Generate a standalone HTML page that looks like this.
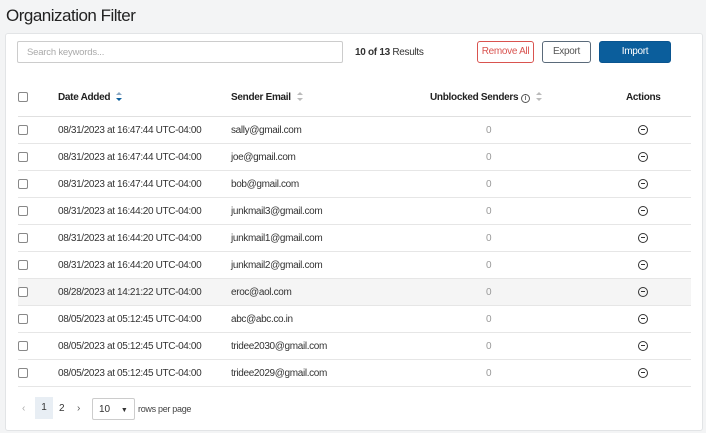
<!DOCTYPE html>
<html><head><style>
*{box-sizing:border-box;margin:0;padding:0}
body{width:706px;height:433px;background:#f3f4f5;font-family:"Liberation Sans",sans-serif;position:relative;overflow:hidden;color:#333}
.t{position:absolute;left:6px;top:6px;font-size:17px;color:#222;letter-spacing:-0.5px}
.card{position:absolute;left:5px;top:33px;width:698px;height:398px;background:#fff;border:1px solid #e2e4e6;border-radius:3px}
.abs{position:absolute}
.inp{left:17px;top:41px;width:326px;height:22px;border:1px solid #ccc;border-radius:2px;font-size:9.5px;color:#aaa;padding:5px 9px;letter-spacing:-0.2px}
.btn{top:41px;height:22px;border-radius:3px;font-size:10px;text-align:center;line-height:20px;letter-spacing:-0.3px}
.cb{width:10px;height:10px;border:1px solid #888;border-radius:2px;left:18px;background:#fff}
.row{left:18px;width:673px;height:27px;border-bottom:1px solid #e6e6e6;font-size:10px;color:#333;letter-spacing:-0.35px}
.row span{position:absolute;top:8px}
.hd{font-weight:bold;font-size:10px;color:#222;letter-spacing:-0.3px}
.minus{position:absolute;left:620px;top:8px;width:10px;height:10px;border:1.3px solid #333;border-radius:50%}
.minus:after{content:"";position:absolute;left:2px;top:3.3px;width:4px;height:1.2px;background:#333}
.sort{display:inline-block;vertical-align:middle;margin-left:6px;width:6px;height:9px;position:relative!important;top:-1px!important}
.sort:before,.sort:after{content:"";position:absolute;left:0;border-left:3px solid transparent;border-right:3px solid transparent}
.sort:before{top:0;border-bottom:3.5px solid #bbb}
.sort:after{bottom:0;border-top:3.5px solid #bbb}
.sort.act:after{border-top-color:#0b5e9c}
.sort.act:before{border-bottom-color:#8aa8c4}
</style></head><body>
<div class="t">Organization Filter</div>
<div class="card"></div>
<div class="abs inp">Search keywords...</div>
<div class="abs" style="left:355px;top:47px;font-size:10px;color:#333;letter-spacing:-0.3px"><b>10 of 13</b> Results</div>
<div class="abs btn" style="left:477px;width:57px;border:1px solid #d9534f;color:#d9534f">Remove All</div>
<div class="abs btn" style="left:542px;width:49px;border:1px solid #5a6a7a;color:#555">Export</div>
<div class="abs btn" style="left:599px;width:72px;background:#0b5e9c;color:#fff;border:1px solid #0a5590">Import</div>

<div class="abs row" style="top:83px;height:34px;border-bottom:1px solid #e0e0e0">
<div class="abs cb" style="left:0;top:9px"></div>
<span class="hd" style="left:40px;top:9px">Date Added<span class="sort act"></span></span>
<span class="hd" style="left:213px;top:9px">Sender Email<span class="sort"></span></span>
<span class="hd" style="left:412px;top:9px">Unblocked Senders <span style="position:static;display:inline-block;width:9px;height:9px;border:1px solid #555;border-radius:50%;font-size:7px;text-align:center;line-height:8px;font-weight:normal">i</span><span class="sort"></span></span>
<span class="hd" style="left:608px;top:9px">Actions</span>
</div>

<div id="rows"></div>
<script>
var d=[["08/31/2023 at 16:47:44 UTC-04:00","sally@gmail.com"],["08/31/2023 at 16:47:44 UTC-04:00","joe@gmail.com"],["08/31/2023 at 16:47:44 UTC-04:00","bob@gmail.com"],["08/31/2023 at 16:44:20 UTC-04:00","junkmail3@gmail.com"],["08/31/2023 at 16:44:20 UTC-04:00","junkmail1@gmail.com"],["08/31/2023 at 16:44:20 UTC-04:00","junkmail2@gmail.com"],["08/28/2023 at 14:21:22 UTC-04:00","eroc@aol.com"],["08/05/2023 at 05:12:45 UTC-04:00","abc@abc.co.in"],["08/05/2023 at 05:12:45 UTC-04:00","tridee2030@gmail.com"],["08/05/2023 at 05:12:45 UTC-04:00","tridee2029@gmail.com"]];
var h="";d.forEach(function(r,i){var t=117+i*27;
h+='<div class="abs row" style="top:'+t+'px;'+(i==6?'background:#f5f5f5':'')+'"><div class="abs cb" style="left:0;top:8px"></div><span style="left:40px">'+r[0]+'</span><span style="left:213px">'+r[1]+'</span><span style="left:468px;color:#999">0</span><div class="minus"></div></div>';});
document.getElementById("rows").outerHTML=h;
</script>
<div class="abs" style="left:22px;top:403px;font-size:10px;color:#aaa">‹</div>
<div class="abs" style="left:35px;top:397px;width:18px;height:22px;background:#e8eef4;font-size:10px;text-align:center;line-height:22px;color:#333">1</div>
<div class="abs" style="left:59px;top:403px;font-size:10px">2</div>
<div class="abs" style="left:77px;top:403px;font-size:10px;color:#555">›</div>
<div class="abs" style="left:92px;top:398px;width:43px;height:22px;border:1px solid #ccc;border-radius:2px;font-size:10px;padding:5px 6px">10 <span style="font-size:7px;margin-left:8px">▼</span></div>
<div class="abs" style="left:138px;top:404px;font-size:9px;color:#444;letter-spacing:-0.3px">rows per page</div>
</body></html>
